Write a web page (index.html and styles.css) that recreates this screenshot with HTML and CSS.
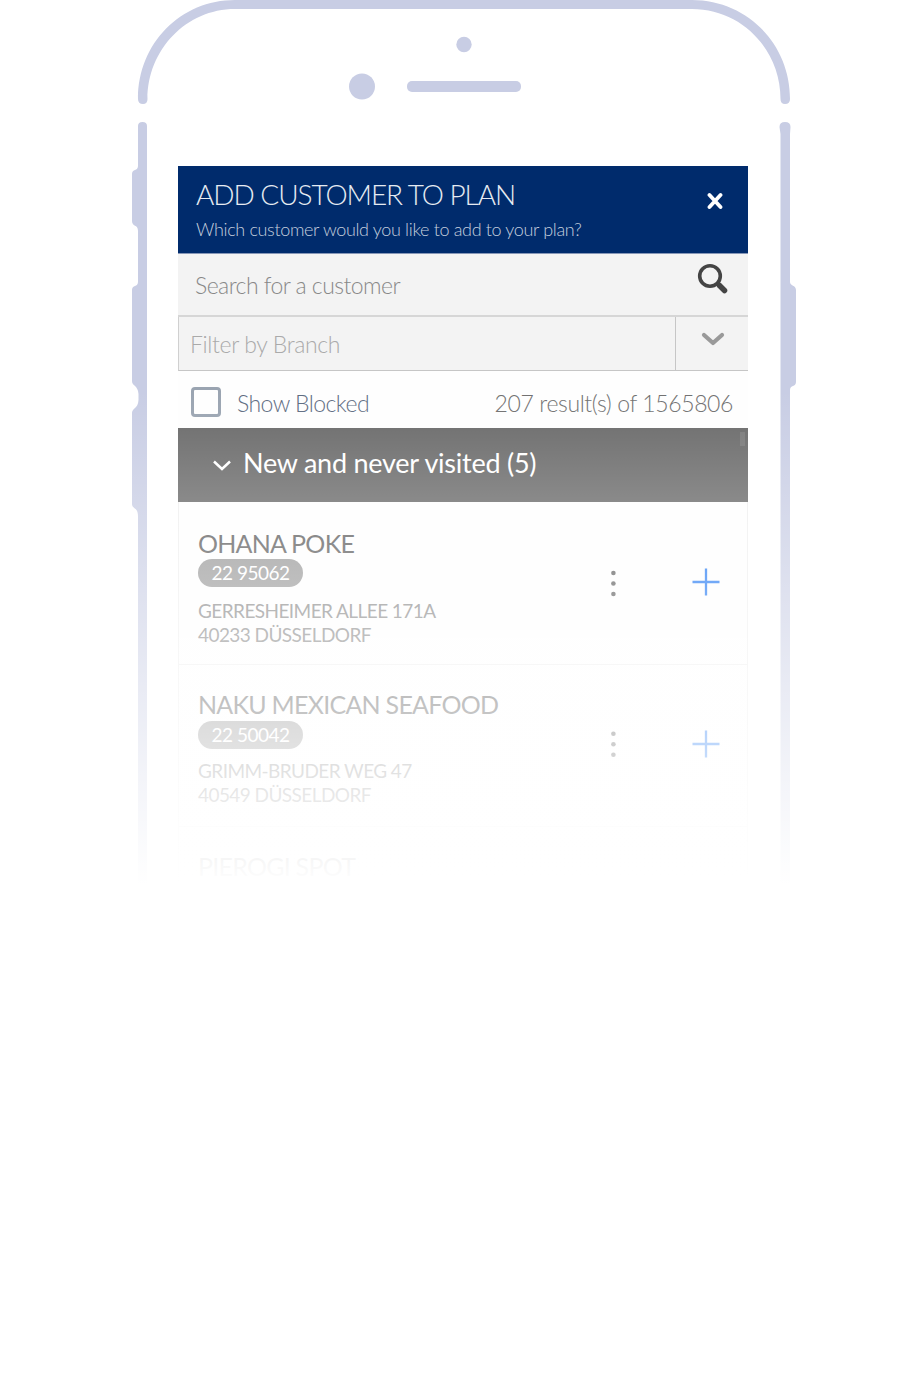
FILE: index.html
```html
<!DOCTYPE html>
<html lang="en">
<head>
<meta charset="utf-8">
<title>Add customer to plan</title>
<link rel="stylesheet" href="styles.css">
</head>
<body>
<main class="phone">
  <svg class="frame" width="910" height="900" viewBox="0 0 910 900" fill="#c8cde4">
    <path d="M138 99C138 43 181 0 235 0H692C747 0 790 44 790 99Q790 104 785 104Q780.500 104 780.500 99C780.500 50 742 9 692 9H235C186 9 147.500 50 147.500 99Q147.500 104 143 104Q138 104 138 99Z"/>
    <circle cx="464" cy="44.500" r="7.700"/>
    <circle cx="362" cy="86.500" r="13"/>
    <rect x="407" y="81" width="114" height="11" rx="5"/>
    <path d="M138 126Q138 122 142.500 122Q147 122 147 126V900H138V516C138 507 132 509 132 504V413C132 408 138 409 138.500 400V394C138 385 132 386 132 381V290C132 285 138 287 138 282V231C138 224 132 227 132 221V174C132 169 138 171 138 166Z"/>
    <path d="M779.500 127Q779.500 122 785 122Q790.500 122 790.500 127L790 134V282C790 286 796 285 796 290V382C796 387 790 385 790 390V900H780.500V134Z"/>
  </svg>
  <section class="screen">
    <header class="header">
      <div>
        <h1 class="title">ADD CUSTOMER TO PLAN</h1>
        <p class="subtitle">Which customer would you like to add to your plan?</p>
      </div>
      <svg class="close" width="16" height="18" viewBox="0 0 16 18"><path d="M2.500 3L13.500 15M13.500 3L2.500 15" stroke="#fff" stroke-width="3.800" stroke-linecap="round"/></svg>
    </header>
    <div class="search">
      <span class="search-text">Search for a customer</span>
      <svg class="lens" width="32" height="32" viewBox="0 0 32 32" fill="none" stroke="#444"><circle cx="13" cy="13" r="10.300" stroke-width="3.600"/><path d="M20.500 20.500L22.500 22.500" stroke-width="4"/><path d="M22.500 22.500L27.500 27.500" stroke-width="5.500" stroke-linecap="round"/></svg>
    </div>
    <div class="filter">
      <span class="filter-text">Filter by Branch</span>
      <span class="toggle"><svg width="24" height="16" viewBox="0 0 24 16" fill="none"><path d="M3 4L12 12L21 4" stroke="#999" stroke-width="4.200" stroke-linecap="round" stroke-linejoin="round"/></svg></span>
    </div>
    <div class="summary">
      <span class="box"></span>
      <span class="blocked">Show Blocked</span>
      <span class="results">207 result(s) of 1565806</span>
    </div>
    <div class="group">
      <svg width="20" height="14" viewBox="0 0 20 14" fill="none"><path d="M2 3.500L10 11L18 3.500" stroke="#fff" stroke-width="2.500"/></svg>
      <span class="group-text">New and never visited (5)</span>
      <span class="thumb"></span>
    </div>
    <article class="item">
      <div class="info">
        <h2 class="name">OHANA POKE</h2>
        <span class="badge">22 95062</span>
        <p class="address">GERRESHEIMER ALLEE 171A<br>40233 DÜSSELDORF</p>
      </div>
      <svg class="dots" width="6" height="28" viewBox="0 0 6 28" fill="#555"><circle cx="3.400" cy="4" r="2.300"/><circle cx="3.400" cy="14.500" r="2.300"/><circle cx="3.400" cy="25" r="2.300"/></svg>
      <svg class="plus" width="28" height="28" viewBox="0 0 28 28"><path d="M.5 14H27.500M14 .5V27.500" stroke="#1973f2" stroke-width="2.300"/></svg>
    </article>
    <article class="item second">
      <div class="info">
        <h2 class="name">NAKU MEXICAN SEAFOOD</h2>
        <span class="badge">22 50042</span>
        <p class="address">GRIMM-BRUDER WEG 47<br>40549 DÜSSELDORF</p>
      </div>
      <svg class="dots" width="6" height="28" viewBox="0 0 6 28" fill="#555"><circle cx="3.400" cy="3.800" r="2.300"/><circle cx="3.400" cy="14.300" r="2.300"/><circle cx="3.400" cy="24.800" r="2.300"/></svg>
      <svg class="plus" width="28" height="28" viewBox="0 0 28 28"><path d="M.5 14H27.500M14 .5V27.500" stroke="#1973f2" stroke-width="2.300"/></svg>
    </article>
    <article class="item third">
      <h2 class="name">PIEROGI SPOT</h2>
    </article>
  </section>
  <div class="fade"></div>
</main>
</body>
</html>
```

FILE: styles.css
```css
* { box-sizing: border-box; }
body { margin: 0; background: #fff; font-family: Lato, sans-serif; }
h1, h2, p { margin: 0; font-weight: 400; }
svg { display: block; flex: none; }
span, h1, h2, p { white-space: nowrap; }
.phone { position: relative; width: 910px; height: 1382px; padding: 166px 0 0 178px; overflow: hidden; }
.frame { position: absolute; left: 0; top: 0; }
.fade { position: absolute; left: 0; top: 390px; width: 910px; height: 992px; background: linear-gradient(rgba(255,255,255,0), #fff 495px); }
.screen { width: 570px; height: 734px; overflow: hidden; background: #fefefe; }
.header { display: flex; justify-content: space-between; height: 87px; padding: 11px 25px 0 18px; background: #002b6c; color: #e6ebf2; }
.title { font-size: 28px; line-height: 34px; font-weight: 300; letter-spacing: -1.05px; }
.subtitle { margin-top: 6px; font-size: 18px; line-height: 24px; font-weight: 300; letter-spacing: -.34px; color: #c5cfde; }
.close { margin-top: 15px; }
.search { display: flex; justify-content: space-between; height: 64px; padding: 9px 19px 0 17px; background: #f3f3f3; border-top: 1px solid #8797b7; border-bottom: 2px solid #d6d6d6; }
.search-text { margin-top: 7px; font-size: 23px; line-height: 30px; font-weight: 300; letter-spacing: -.55px; color: #888; }
.filter { display: flex; height: 54px; background: #f3f3f3; border-left: 1px solid #d0d0d0; border-bottom: 1px solid #c6c6c6; }
.filter-text { width: 497px; padding: 12px 0 0 11px; font-size: 23px; line-height: 30px; font-weight: 300; letter-spacing: -.36px; color: #aaa; border-right: 1px solid #c6c6c6; }
.toggle { padding: 14px 0 0 25px; }
.summary { display: flex; height: 57px; padding: 16px 15px 0 13px; }
.box { width: 30px; height: 30px; border: 3px solid #9aa4b1; border-radius: 4px; }
.blocked { margin-left: 16px; font-size: 23px; line-height: 32px; font-weight: 300; letter-spacing: -.55px; color: #5d6b81; }
.results { margin-left: auto; font-size: 23px; line-height: 32px; font-weight: 300; letter-spacing: -.39px; color: #707070; }
.group { position: relative; display: flex; height: 74px; padding: 30px 0 0 34px; background: #686868; color: #fff; }
.group-text { margin: -12px 0 0 11px; font-size: 27px; line-height: 34px; letter-spacing: -.24px; }
.thumb { position: absolute; right: 3px; top: 4px; width: 5px; height: 14px; background: #777; }
.item { display: flex; height: 163px; padding: 25px 27px 0 19px; border: solid #eee; border-width: 0 1px 1px; }
.info { width: 412px; }
.name { font-size: 25px; line-height: 32px; letter-spacing: -.75px; color: #595959; }
.badge { display: block; width: 105px; height: 28px; border-radius: 14px; background: #959595; color: #fff; text-align: center; font-size: 19px; line-height: 28px; letter-spacing: -.5px; }
.address { margin-top: 12px; font-size: 19px; line-height: 24px; letter-spacing: -.57px; color: #808080; }
.dots { margin: 42px 0 0 1px; }
.plus { margin: 41px 0 0 76px; }
.second { height: 162px; padding-top: 23px; }
.second .badge { margin-top: 1px; }
.second .address { margin-top: 10px; }
.second .plus { margin-top: 42px; }
.third { padding-top: 23px; }
```
